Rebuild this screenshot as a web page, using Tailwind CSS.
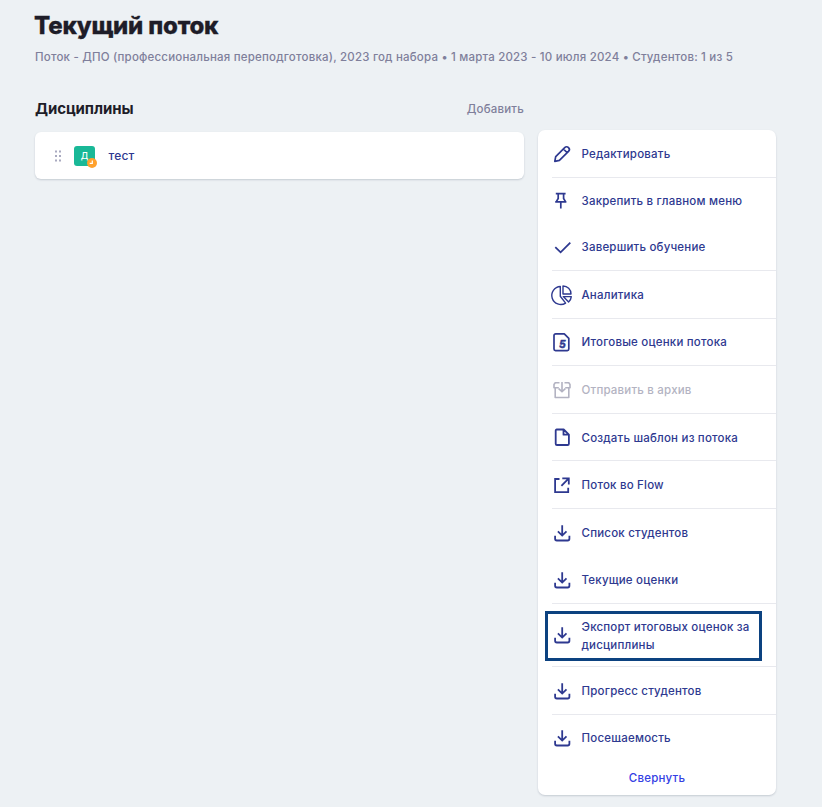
<!DOCTYPE html>
<html lang="ru">
<head>
<meta charset="utf-8">
<title>Текущий поток</title>
<script src="https://cdn.jsdelivr.net/npm/@tailwindcss/browser@4"></script>
</head>
<body class="h-[807px] overflow-hidden bg-[#edf1f4] font-['Inter','Liberation_Sans',sans-serif] text-[11.5px] font-medium tracking-[0.2px] text-[#2e3990]">
<svg class="hidden">
  <symbol id="download" viewBox="0 0 20 20"><path d="M10.2 2.2v10.3M5.9 8.4l4.3 4.2 4.3-4.2M3.1 12.8v3a1.7 1.7 0 0 0 1.7 1.7h10.9a1.7 1.7 0 0 0 1.7-1.7v-3" fill="none" stroke="currentColor" stroke-width="1.8"/></symbol>
</svg>
<header class="pt-[10px] pl-[35px]">
  <h1 class="-ml-px h-8 text-[24px] leading-8 font-extrabold tracking-[-0.2px] whitespace-nowrap text-[#1e1d28] [-webkit-text-stroke:0.3px_#1e1d28]">Текущий поток</h1>
  <p class="mt-[6px] h-[18px] leading-[18px] whitespace-nowrap text-[#7f7f9b]">Поток - ДПО (профессиональная переподготовка), 2023 год набора • 1 марта 2023 - 10 июля 2024 • Студентов: 1 из 5</p>
</header>
<main class="flex items-start pl-[35px]">
  <section class="w-[489px] pt-[31px]">
    <div class="flex h-[35px] items-start justify-between">
      <h2 class="text-[15px] leading-6 font-bold tracking-[-0.1px] text-[#1e1d28]">Дисциплины</h2>
      <span class="leading-6 text-[#7f7f9b]">Добавить</span>
    </div>
    <div class="flex h-[47px] items-center rounded-[6px] bg-white pl-[20px] shadow-[0_1px_2px_rgba(40,55,80,0.2)]">
      <svg class="h-[12px] w-[7px]" viewBox="0 0 7 12" fill="#a9aac0"><rect x="0" y="0.5" width="2" height="2"/><rect x="4" y="0.5" width="2" height="2"/><rect x="0" y="5" width="2" height="2"/><rect x="4" y="5" width="2" height="2"/><rect x="0" y="9.5" width="2" height="2"/><rect x="4" y="9.5" width="2" height="2"/></svg>
      <div class="relative ml-[12px] flex h-[20px] w-[21px] items-center justify-center rounded-[3px] bg-[#19b897] text-[9px] tracking-normal text-white">Д
        <svg class="absolute top-[12px] left-[13px] h-[10px] w-[10px]" viewBox="0 0 10 10"><circle cx="5" cy="5" r="5" fill="#ffa12d"/><path d="M5.3 2.5v2.8H2.7" fill="none" stroke="#fff" stroke-width="1.2"/></svg>
      </div>
      <span class="ml-[13.5px] text-[12px]">тест</span>
    </div>
  </section>
  <aside class="mt-[64px] ml-[14px] h-[665px] w-[238px] rounded-[7px] bg-white shadow-[0_1px_2px_rgba(40,55,80,0.2)]">
    <div class="h-[618px] overflow-hidden pl-[14px]">
      <div class="flex h-[48px] items-center gap-[9.5px] border-b border-[#e8e9ee]">
        <svg class="size-5 shrink-0" viewBox="0 0 20 20" fill="none" stroke="currentColor" stroke-width="1.7" stroke-linejoin="round"><path d="M2.8 17.3l.9-4.7L12.7 3.6a2.6 2.6 0 0 1 3.8 3.8L7.4 16.4zM11.4 5l3.7 3.7"/></svg>
        <span class="pt-[2px]">Редактировать</span>
      </div>
      <div class="flex h-[46px] items-center gap-[9.5px]">
        <svg class="size-5 shrink-0" viewBox="0 0 20 20" fill="none" stroke="currentColor" stroke-width="1.7"><path d="M3.8 2.7h9.8M6.2 2.7v4.8L4.3 10.6M11.6 2.7v4.8l1.9 3.1M3.2 10.9h11.2M8.8 10.9V17.5"/></svg>
        <span class="pt-[2px]">Закрепить в главном меню</span>
      </div>
      <div class="flex h-[47px] items-center gap-[9.5px] border-b border-[#e8e9ee]">
        <svg class="size-5 shrink-0" viewBox="0 0 20 20" fill="none" stroke="currentColor" stroke-width="1.8"><path d="M3.3 10.2L8.6 15.3 18.3 5.6"/></svg>
        <span class="pt-[2px]">Завершить обучение</span>
      </div>
      <div class="flex h-[48px] items-center gap-[9.5px] border-b border-[#e8e9ee]">
        <svg class="size-5 shrink-0 overflow-visible" viewBox="0 0 20 20" fill="none" stroke="currentColor" stroke-width="1.4" stroke-linejoin="round"><path d="M8.3 1.5a9 9 0 1 0 5.3 16.6L8.3 11.3zM11 1v8h8c0-4.5-3.5-8-8-8zM11.3 11.6h8c-.2 2.2-1.1 4-2.7 5.4z"/></svg>
        <span class="pt-[2px]">Аналитика</span>
      </div>
      <div class="flex h-[47px] items-center gap-[9.5px] border-b border-[#e8e9ee]">
        <svg class="size-5 shrink-0" viewBox="0 0 20 20" fill="none" stroke="currentColor" stroke-width="1.7" stroke-linejoin="round"><path d="M3.7 1.8h8.6l4.5 4.5v10.8a1.5 1.5 0 0 1-1.5 1.5H3.5a1.5 1.5 0 0 1-1.5-1.5V3.5A1.7 1.7 0 0 1 3.7 1.8z"/><text x="7" y="16.3" fill="currentColor" stroke="currentColor" stroke-width=".5" font-size="10.5" font-weight="700" font-style="italic" letter-spacing="0">5</text></svg>
        <span class="pt-[2px]">Итоговые оценки потока</span>
      </div>
      <div class="flex h-[48px] items-center gap-[9.5px] border-b border-[#e8e9ee] text-[#b3b3c2]">
        <svg class="size-5 shrink-0" viewBox="0 0 20 20" fill="none" stroke="currentColor" stroke-width="1.6" stroke-linejoin="round"><path d="M7.5 2.8H3.2L2 4.5v3.2h4.8M12.5 2.8h4.3L18 4.5v3.2h-4.8M3.2 7.7v9.8h13.6V7.7M10 2v9.5M6.7 8.6l3.3 3.2 3.3-3.2"/></svg>
        <span class="pt-[2px]">Отправить в архив</span>
      </div>
      <div class="flex h-[47px] items-center gap-[9.5px] border-b border-[#e8e9ee]">
        <svg class="size-5 shrink-0" viewBox="0 0 20 20" fill="none" stroke="currentColor" stroke-width="1.8" stroke-linejoin="round"><path d="M4.7 2.5h7l5.2 5.2v9a1.3 1.3 0 0 1-1.3 1.3H5a1.3 1.3 0 0 1-1.3-1.3V3.5a1 1 0 0 1 1-1zM11.5 2.7v5h5"/></svg>
        <span class="pt-[3px]">Создать шаблон из потока</span>
      </div>
      <div class="flex h-[48px] items-center gap-[9.5px] border-b border-[#e8e9ee]">
        <svg class="size-5 shrink-0" viewBox="0 0 20 20" fill="none" stroke="currentColor" stroke-width="1.8"><path d="M7.5 4H3.1v13.2h13.1v-4.5M10.3 3.3h6.5v6.3M16.5 3.6l-7.1 7.2"/></svg>
        <span class="pt-[2px]">Поток во Flow</span>
      </div>
      <div class="flex h-[47px] items-center gap-[9.5px]">
        <svg class="size-5 shrink-0"><use href="#download"/></svg>
        <span class="pt-[2px]">Список студентов</span>
      </div>
      <div class="flex h-[48px] items-center gap-[9.5px] border-b border-[#e8e9ee]">
        <svg class="size-5 shrink-0"><use href="#download"/></svg>
        <span class="pt-[2px]">Текущие оценки</span>
      </div>
      <div class="relative flex h-[63px] items-center gap-[9.5px] border-b border-[#e8e9ee]">
        <svg class="size-5 shrink-0"><use href="#download"/></svg>
        <span class="pt-px leading-[18px] whitespace-nowrap">Экспорт итоговых оценок за<br>дисциплины</span>
        <div class="absolute top-[7px] left-[-7px] h-[50px] w-[217px] border-[3px] border-[#0c4280]"></div>
      </div>
      <div class="flex h-[48px] items-center gap-[9.5px] border-b border-[#e8e9ee]">
        <svg class="size-5 shrink-0"><use href="#download"/></svg>
        <span class="pt-[2px]">Прогресс студентов</span>
      </div>
      <div class="flex h-[47px] items-start gap-[9.5px] pt-[13px]">
        <svg class="size-5 shrink-0"><use href="#download"/></svg>
        <span class="mt-[2px] h-[12px] overflow-hidden leading-[16px]">Посещаемость</span>
      </div>
    </div>
    <div class="pt-[21px] text-center leading-[18px] text-[#3340e4]">Свернуть</div>
  </aside>
</main>
</body>
</html>
